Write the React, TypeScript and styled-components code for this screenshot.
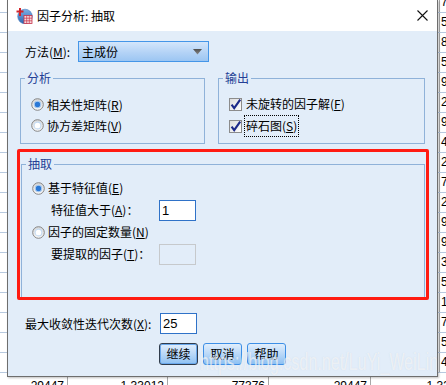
import styled, { createGlobalStyle } from "styled-components";

const GlobalStyle = createGlobalStyle`
  html, body {
    margin: 0;
    padding: 0;
  }
  body {
    width: 446px;
    height: 385px;
    overflow: hidden;
    background: #fff;
    font-family: "Noto Sans CJK SC", "Liberation Sans", sans-serif;
    font-size: 12px;
    color: #000;
  }
`;

const Desktop = styled.div`
  position: relative;
  width: 446px;
  height: 385px;
  overflow: hidden;
  background: #fff;
`;

/* spreadsheet behind the dialog */
const Sheet = styled.div`
  display: flex;
  flex-direction: column;
  margin-top: -7px;
  font-family: "Liberation Sans", Arial, sans-serif;
  font-size: 12px;
`;

const SheetRow = styled.div<{ $cols: string; $shift?: number }>`
  display: grid;
  grid-template-columns: ${(p) => p.$cols};
  height: 20px;
  box-sizing: border-box;
  border-bottom: 1px solid #b7c9df;
  padding-top: ${(p) => p.$shift ?? 0}px;
`;

const Cell = styled.div<{ $align?: string }>`
  border-right: 1px solid #a8a8a8;
  line-height: 19px;
  text-align: ${(p) => p.$align || "right"};
  padding: ${(p) => (p.$align === "left" ? "0 0 0 1px" : "0 3px 0 0")};
  white-space: nowrap;
  overflow: hidden;
`;

/* dialog window */
const Dialog = styled.div`
  position: absolute;
  left: 7px;
  top: 0;
  width: 431px;
  height: 377px;
  box-sizing: border-box;
  border: 1px solid #6e6e6e;
  border-top: none;
  display: flex;
  flex-direction: column;
  overflow: hidden;
  box-shadow: 1px 1px 2px rgba(0, 0, 0, 0.25);
`;

const TitleBar = styled.div`
  height: 31px;
  flex-shrink: 0;
  background: #fff;
  display: flex;
  align-items: center;
  padding: 0 9px 0 8px;
`;

const Title = styled.span`
  margin-left: 4px;
  flex: 1;
  line-height: 16px;
  padding-top: 1px;
`;

const Body = styled.div`
  flex: 1;
  background: #e2edf9;
  padding: 10px 12px 0 12px;
  display: flex;
  flex-direction: column;
`;

const Row = styled.div<{ $top?: number; $pad?: number; $h?: number }>`
  display: flex;
  align-items: center;
  height: ${(p) => p.$h ?? 21}px;
  margin-top: ${(p) => p.$top ?? 0}px;
  padding-left: ${(p) => p.$pad ?? 0}px;
`;

const Label = styled.span<{ $w: number }>`
  width: ${(p) => p.$w}px;
  flex-shrink: 0;
  line-height: 16px;
  white-space: nowrap;
`;

const Mn = styled.u`
  text-decoration: underline;
  text-underline-offset: 1px;
`;

const Dropdown = styled.div`
  width: 131px;
  height: 21px;
  box-sizing: border-box;
  border: 1px solid #4596e8;
  background: linear-gradient(#d4e6fb, #b4d3f6 55%, #9cc6f2);
  display: flex;
  align-items: center;
  justify-content: space-between;
  padding: 0 6px 0 3px;
  line-height: 16px;
`;

const GroupsRow = styled.div`
  display: flex;
  gap: 13px;
  margin-top: 8px;
`;

const Group = styled.fieldset<{ $w: number; $h: number }>`
  margin: 0;
  padding: 0;
  min-width: 0;
  width: ${(p) => p.$w}px;
  height: ${(p) => p.$h}px;
  box-sizing: border-box;
  border: 1px solid #8fb2d9;
`;

const Legend = styled.legend`
  margin-left: 4px;
  padding: 0 2px;
  color: #243f95;
  line-height: 16px;
  font-size: 12px;
`;

const OptionList = styled.div<{ $top: number; $left: number }>`
  display: flex;
  flex-direction: column;
  padding: ${(p) => p.$top}px 0 0 ${(p) => p.$left}px;
`;

const Option = styled.div<{ $h: number; $gap: number }>`
  display: flex;
  align-items: center;
  gap: ${(p) => p.$gap}px;
  height: ${(p) => p.$h}px;
  line-height: 16px;
  white-space: nowrap;
`;

const Focused = styled.span`
  border: 1px dotted #000;
  padding: 2px 1px;
  margin-left: -2px;
`;

const Highlight = styled.div`
  margin: 5px 0 0 -3px;
  width: 412px;
  height: 151px;
  box-sizing: border-box;
  border: 3px solid #ff1b12;
  border-radius: 2px;
  overflow: hidden;
  padding: 4px 0 0 1px;
`;

const TextBox = styled.div<{ $disabled?: boolean }>`
  width: 37px;
  height: 21px;
  box-sizing: border-box;
  border: 1px solid ${(p) => (p.$disabled ? "#c6c9cc" : "#2f72c8")};
  background: ${(p) => (p.$disabled ? "transparent" : "#fff")};
  padding-left: 2px;
  line-height: 19px;
  font-family: "Liberation Sans", Arial, sans-serif;
  font-size: 13px;
`;

const ButtonRow = styled.div`
  display: flex;
  justify-content: center;
  gap: 5px;
  margin-top: 9px;
`;

const Button = styled.div<{ $default?: boolean }>`
  width: 39px;
  height: 22px;
  box-sizing: border-box;
  border: 1px solid ${(p) => (p.$default ? "#303c4c" : "#3d8fe6")};
  border-radius: 3px;
  box-shadow: ${(p) => (p.$default ? "inset 0 0 0 1px #6aa8ec" : "none")};
  background: linear-gradient(#e1eefc, #b9d8f8 50%, #8ec1f3);
  display: flex;
  align-items: center;
  justify-content: center;
  line-height: 16px;
`;

const Watermark = styled.div`
  position: absolute;
  left: 192px;
  top: 349px;
  font-family: "Liberation Sans", Arial, sans-serif;
  font-size: 23px;
  line-height: 26px;
  white-space: nowrap;
  color: rgba(255, 255, 255, 0.6);
  text-shadow: 0 0 1px rgba(170, 180, 195, 0.35);
  transform: scaleX(0.7);
  transform-origin: left top;
  pointer-events: none;
`;

const AppIcon = () => (
  <svg width="17" height="17" viewBox="0 0 17 17">
    <defs>
      <linearGradient id="ai" x1="0" y1="0" x2="0" y2="1">
        <stop offset="0" stopColor="#7fb0e6" />
        <stop offset="1" stopColor="#2c64b0" />
      </linearGradient>
    </defs>
    <circle cx="9" cy="9.5" r="7.3" fill="url(#ai)" stroke="#4b7fc0" strokeWidth="0.6" />
    <rect x="8" y="8.5" width="8" height="8" fill="#f6d9de" stroke="#c8344a" strokeWidth="0.8" />
    <path d="M8 11.2h8M8 13.8h8M10.7 8.5v8M13.3 8.5v8" stroke="#c8344a" strokeWidth="0.7" />
    <path d="M4 1v8M0.5 4.5h7" stroke="#d2232a" strokeWidth="2" />
  </svg>
);

const CloseIcon = () => (
  <svg width="11" height="11" viewBox="0 0 11 11">
    <path d="M0.5 0.5l10 10M10.5 0.5l-10 10" stroke="#111" strokeWidth="1.1" />
  </svg>
);

const Arrow = () => (
  <svg width="9" height="6" viewBox="0 0 9 6">
    <defs>
      <linearGradient id="ar" x1="0" y1="0" x2="0" y2="1">
        <stop offset="0" stopColor="#4e4e4e" />
        <stop offset="1" stopColor="#8a8a8a" />
      </linearGradient>
    </defs>
    <path d="M0 0h9L4.5 5.5z" fill="url(#ar)" />
  </svg>
);

const Radio = ({ checked }: { checked?: boolean }) => (
  <svg width="13" height="13" viewBox="0 0 13 13">
    <defs>
      <linearGradient id="rb" x1="0" y1="0" x2="0" y2="1">
        <stop offset="0" stopColor="#d6d6d6" />
        <stop offset="1" stopColor="#fbfbfb" />
      </linearGradient>
    </defs>
    <circle cx="6.5" cy="6.5" r="5.8" fill="url(#rb)" stroke="#858585" strokeWidth="1" />
    {checked ? (
      <circle cx="6.5" cy="6.5" r="3.2" fill="#2a78d6" stroke="#a9cbf0" strokeWidth="1.1" />
    ) : (
      <circle cx="6.5" cy="6.5" r="3.4" fill="#fff" stroke="#c3daf2" strokeWidth="1.1" />
    )}
  </svg>
);

const Check = () => (
  <svg width="13" height="13" viewBox="0 0 13 13">
    <defs>
      <linearGradient id="cb" x1="0" y1="0" x2="1" y2="1">
        <stop offset="0" stopColor="#dcdcdc" />
        <stop offset="1" stopColor="#ffffff" />
      </linearGradient>
    </defs>
    <rect x="0.5" y="0.5" width="12" height="12" fill="url(#cb)" stroke="#8c8c8c" />
    <path d="M2.6 6.6L5.2 10.2L11.2 1.6" fill="none" stroke="#1d2a8a" strokeWidth="2.1" />
  </svg>
);

const upperDigits = ["7", "5", "8", "5", "9", "2", "9", "4", "2", "7", "2", "9", "9", "3", "5", "1", "7", "5", "4"];
const bottomRow = ["29447", "1.33012", "77376", "29447", "1.33012"];

const App = () => (
  <Desktop>
    <GlobalStyle />
    <Sheet>
      {upperDigits.map((d, i) => (
        <SheetRow key={i} $cols="440px 60px">
          <Cell />
          <Cell $align="left">{d}.1284</Cell>
        </SheetRow>
      ))}
      <SheetRow $cols="68px 100px 101px 102px 103px" $shift={4}>
        {bottomRow.map((v, i) => (
          <Cell key={i}>{v}</Cell>
        ))}
      </SheetRow>
    </Sheet>

    <Dialog>
      <TitleBar>
        <AppIcon />
        <Title>因子分析: 抽取</Title>
        <CloseIcon />
      </TitleBar>

      <Body>
        <Row $pad={5}>
          <Label $w={53}>
            方法(<Mn>M</Mn>):
          </Label>
          <Dropdown>
            <span>主成份</span>
            <Arrow />
          </Dropdown>
        </Row>

        <GroupsRow>
          <Group $w={185} $h={74}>
            <Legend>分析</Legend>
            <OptionList $top={8} $left={10}>
              <Option $h={21} $gap={3}>
                <Radio checked />
                <span>
                  相关性矩阵(<Mn>R</Mn>)
                </span>
              </Option>
              <Option $h={21} $gap={3}>
                <Radio />
                <span>
                  协方差矩阵(<Mn>V</Mn>)
                </span>
              </Option>
            </OptionList>
          </Group>

          <Group $w={207} $h={74}>
            <Legend>输出</Legend>
            <OptionList $top={7} $left={10}>
              <Option $h={22} $gap={4}>
                <Check />
                <span>
                  未旋转的因子解(<Mn>F</Mn>)
                </span>
              </Option>
              <Option $h={22} $gap={4}>
                <Check />
                <Focused>
                  碎石图(<Mn>S</Mn>)
                </Focused>
              </Option>
            </OptionList>
          </Group>
        </GroupsRow>

        <Highlight>
          <Group $w={404} $h={160}>
            <Legend>抽取</Legend>
            <OptionList $top={5} $left={10}>
              <Option $h={22} $gap={3}>
                <Radio checked />
                <span>
                  基于特征值(<Mn>E</Mn>)
                </span>
              </Option>
              <Row $h={22} $pad={19}>
                <Label $w={108}>
                  特征值大于(<Mn>A</Mn>)：
                </Label>
                <TextBox>1</TextBox>
              </Row>
              <Option $h={22} $gap={3}>
                <Radio />
                <span>
                  因子的固定数量(<Mn>N</Mn>)
                </span>
              </Option>
              <Row $h={22} $pad={19}>
                <Label $w={108}>
                  要提取的因子(<Mn>T</Mn>)：
                </Label>
                <TextBox $disabled />
              </Row>
            </OptionList>
          </Group>
        </Highlight>

        <Row $top={13} $pad={5}>
          <Label $w={135}>
            最大收敛性迭代次数(<Mn>X</Mn>):
          </Label>
          <TextBox>25</TextBox>
        </Row>

        <ButtonRow>
          <Button $default>继续</Button>
          <Button>取消</Button>
          <Button>帮助</Button>
        </ButtonRow>
      </Body>

      <Watermark>https://blog.csdn.net/LuYi_WeiLin</Watermark>
    </Dialog>
  </Desktop>
);

export default App;
